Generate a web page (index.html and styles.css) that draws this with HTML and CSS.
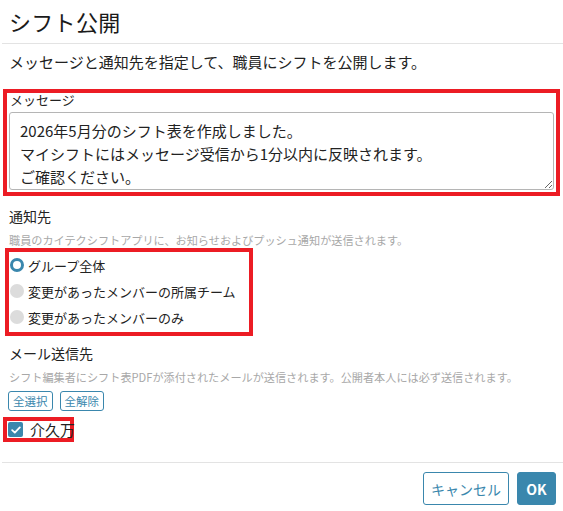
FILE: index.html
```html
<!DOCTYPE html>
<html lang="ja">
<head>
<meta charset="utf-8">
<title>シフト公開</title>
<link rel="stylesheet" href="styles.css">
</head>
<body>
<div class="modal">
  <div class="modal-header">
    <h1 class="modal-title">シフト公開</h1>
  </div>
  <div class="modal-body">
    <p class="lead">メッセージと通知先を指定して、職員にシフトを公開します。</p>

    <div class="mark mark-message">
      <label class="field-label" for="msg">メッセージ</label>
      <div class="textarea-wrap">
        <textarea id="msg" class="textarea">2026年5月分のシフト表を作成しました。
マイシフトにはメッセージ受信から1分以内に反映されます。
ご確認ください。</textarea>
      </div>
    </div>

    <div class="section-title notify-title">通知先</div>
    <div class="help">職員のカイテクシフトアプリに、お知らせおよびプッシュ通知が送信されます。</div>

    <div class="mark mark-radios">
      <div class="radio-row"><span class="radio checked"></span><span class="radio-label">グループ全体</span></div>
      <div class="radio-row"><span class="radio"></span><span class="radio-label">変更があったメンバーの所属チーム</span></div>
      <div class="radio-row"><span class="radio"></span><span class="radio-label">変更があったメンバーのみ</span></div>
    </div>

    <div class="section-title mail-title">メール送信先</div>
    <div class="help">シフト編集者にシフト表PDFが添付されたメールが送信されます。公開者本人には必ず送信されます。</div>

    <div class="mini-buttons">
      <button class="btn-mini">全選択</button>
      <button class="btn-mini">全解除</button>
    </div>

    <div class="mark mark-check">
      <span class="checkbox">
        <svg width="10" height="8" viewBox="0 0 10 8"><path d="M1.2 4.2 L3.8 6.6 L8.8 1.4" fill="none" stroke="#fff" stroke-width="1.8" stroke-linecap="round" stroke-linejoin="round"/></svg>
      </span>
      <span class="check-label">介久万</span>
    </div>
  </div>
  <div class="modal-footer">
    <button class="btn btn-outline">キャンセル</button>
    <button class="btn btn-primary">OK</button>
  </div>
</div>
</body>
</html>
```
FILE: styles.css
```css
* { box-sizing: border-box; }

body {
  margin: 0;
  background: #fff;
  font-family: "Noto Sans CJK JP", "Noto Sans", sans-serif;
  color: #222;
}

.modal {
  width: 563px;
  height: 511px;
  overflow: hidden;
}

.modal-header {
  margin-left: 2px;
  padding-left: 7px;
  height: 44px;
  border-bottom: 1px solid #e3e3e3;
}

.modal-title {
  margin: 0;
  font-size: 22px;
  font-weight: 400;
  line-height: 42px;
  color: #1a1a1a;
  letter-spacing: 0.3px;
}

.modal-body {
  padding: 0 9px;
}

.lead {
  margin: 7px 0 0;
  font-size: 15px;
  line-height: 22px;
  color: #222;
}

.mark {
  border: 4px solid #ec1c24;
}

.mark-message {
  margin: 16px -6px 0 -6px;
  padding: 0 2px 2px 2px;
}

.field-label {
  display: block;
  padding-left: 1px;
  font-size: 13px;
  line-height: 13px;
  color: #222;
}

.textarea-wrap {
  margin-top: 6px;
}

.textarea {
  display: block;
  width: 100%;
  height: 78px;
  margin: 0;
  padding: 6px 10px;
  border: 1px solid #b5b5b5;
  border-radius: 3px;
  font-family: "Noto Sans CJK JP", "Noto Sans", sans-serif;
  font-size: 15px;
  line-height: 23px;
  color: #222;
  resize: both;
  overflow: hidden;
}

.section-title {
  font-size: 14px;
  line-height: 20px;
  color: #222;
}

.notify-title { margin-top: 10px; }
.mail-title { margin-top: 7px; }

.help {
  margin-top: 6px;
  font-size: 11.15px;
  line-height: 16px;
  color: #a8a8a8;
  white-space: nowrap;
}

.mark-radios {
  width: 248px;
  margin: 0 0 0 -4px;
  padding: 0 0 2px 0;
}

.radio-row {
  display: flex;
  align-items: center;
  height: 26px;
  white-space: nowrap;
}

.radio {
  width: 14px;
  height: 14px;
  margin-left: 1px;
  border-radius: 50%;
  background: #dcdcdc;
  flex: none;
}

.radio.checked {
  background: #fff;
  border: 3px solid #3a87ad;
}

.radio-label {
  margin-left: 4px;
  font-size: 13px;
  color: #222;
}

.mini-buttons {
  display: flex;
  gap: 7px;
  margin-top: 6px;
  margin-left: -1px;
}

.btn-mini {
  height: 20px;
  padding: 0 4px;
  border: 1px solid #3a87ad;
  border-radius: 3px;
  background: #fff;
  color: #3a87ad;
  font-family: "Noto Sans CJK JP", "Noto Sans", sans-serif;
  font-size: 11.5px;
  line-height: 18px;
}

.mark-check {
  display: flex;
  align-items: center;
  width: 71px;
  height: 25px;
  margin: 6px 0 0 -6px;
  padding-left: 1px;
  white-space: nowrap;
}

.checkbox {
  display: inline-flex;
  align-items: center;
  justify-content: center;
  flex: none;
  width: 15px;
  height: 15px;
  border-radius: 2px;
  background: #3a87ad;
}

.check-label {
  margin-left: 7px;
  font-size: 15px;
  line-height: 16px;
  color: #222;
}

.modal-footer {
  position: absolute;
  left: 2px;
  right: 0;
  top: 462px;
  display: flex;
  justify-content: flex-end;
  gap: 8px;
  padding: 9px 7px 0 0;
  border-top: 1px solid #e3e3e3;
}

.btn {
  height: 33px;
  border-radius: 3px;
  font-family: "Noto Sans CJK JP", "Noto Sans", sans-serif;
  font-size: 14px;
}

.btn-outline {
  width: 86px;
  background: #fff;
  border: 1px solid #3a87ad;
  color: #3a87ad;
}

.btn-primary {
  width: 39px;
  background: #3a87ad;
  border: 1px solid #3a87ad;
  color: #fff;
  font-weight: 700;
}
```
